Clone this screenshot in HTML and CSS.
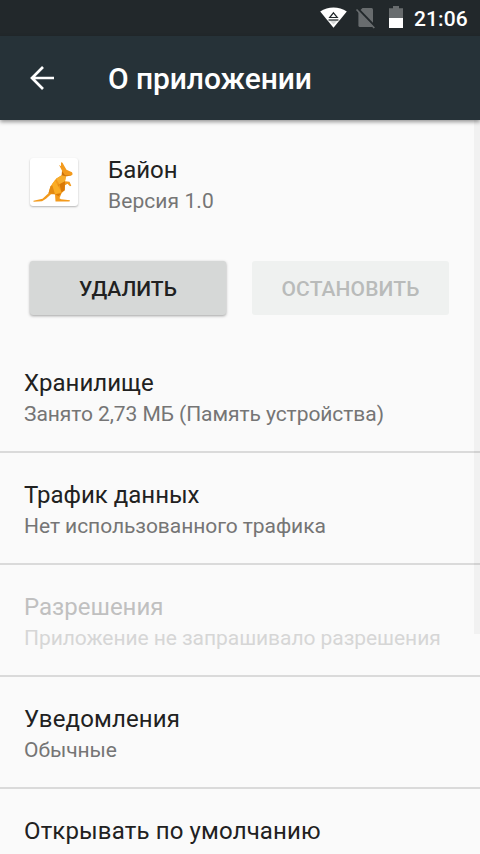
FILE: index.html
```html
<!DOCTYPE html>
<html lang="ru">
<head>
<meta charset="utf-8">
<title>О приложении</title>
<link rel="stylesheet" href="styles.css">
</head>
<body>
<div class="screen">
  <div class="statusbar">
    <svg class="status-icons" width="94" height="36" viewBox="320 0 94 36">
      <path d="M320.2 11.600C328 6 339 6 346.800 11.600L333.500 27.800Z" fill="#fff"/>
      <path d="M333.500 12.800L337.300 17.500H329.700Z" fill="#fff" stroke="#22282b" stroke-width="1.200"/>
      <path d="M329 20H338L333.500 24.500Z" fill="#d5d7d7"/>
      <path d="M328.500 20H338.500" stroke="#22282b" stroke-width="1.200"/>
      <path d="M362.500 8H371.500Q373 8 373 9.500V25.500Q373 27 371.500 27H360Q358.400 27 358.400 25.500V12Z" fill="#686c6e"/>
      <path d="M357.800 8.800L375.500 27" stroke="#22282b" stroke-width="2.500"/>
      <path d="M356.500 9.500L374.300 28" stroke="#686c6e" stroke-width="1.700"/>
      <path d="M389 8.300H393V6H399V8.300H403V18H389Z" fill="#686c6e"/>
      <path d="M389 18H403V28H389Z" fill="#fff"/>
    </svg>
    <span class="clock">21:06</span>
  </div>
  <header class="appbar">
    <svg class="back" width="24" height="24" viewBox="0 0 24 24" fill="none" stroke="#fff" stroke-width="2.700"><path d="M24 12H2.500M13 1L2 12L13 23"/></svg>
    <h1 class="title">О приложении</h1>
  </header>
  <main class="content">
    <section class="app">
      <div class="app-icon">
        <svg width="48" height="48" viewBox="0 0.800 48 48">
          <path d="M31 5L32.500 5.500L35 10L36.500 12.500L42 15L42.700 17L41 18.500L36 19L35 24L39.500 24.500L41.300 28.500L40 29L37.500 26.500L35 28L34.700 33L31.500 36L29.500 41L31 42L40 43L39.500 44.300H25.500L25 37L21 37L16 41.500L12 44L3.500 44.500V43.500L12.500 41.500L18.500 36L20.500 29L26 21.500L31.500 18L32 13.500L29 7.500L31 9Z" fill="#f39a1c"/>
          <path d="M26 21.500L32 18L36 19L35 24L29.500 27Z" fill="#f7ae2f"/>
          <path d="M20.500 29L29.500 27L25 37L18.500 36Z" fill="#e38a12"/>
          <path d="M22 27L25 23L31.500 35L25 37Z" fill="#fbad25"/>
          <path d="M29.500 27L35 24L34.700 33L31.500 35ZM25.500 37L31.500 36L28.500 39Z" fill="#d87908"/>
          <path d="M32 14L35 18L41 18.500L36 19L32 18Z" fill="#c9710c"/>
        </svg>
      </div>
      <div class="app-text">
        <div class="primary">Байон</div>
        <div class="secondary">Версия 1.0</div>
      </div>
    </section>
    <div class="actions">
      <button class="btn">УДАЛИТЬ</button>
      <button class="btn btn-disabled" disabled>ОСТАНОВИТЬ</button>
    </div>
    <section class="list">
      <div class="row"><div class="primary">Хранилище</div><div class="secondary">Занято 2,73 МБ (Память устройства)</div></div>
      <div class="row"><div class="primary">Трафик данных</div><div class="secondary">Нет использованного трафика</div></div>
      <div class="row row-disabled"><div class="primary">Разрешения</div><div class="secondary">Приложение не запрашивало разрешения</div></div>
      <div class="row"><div class="primary wide">Уведомления</div><div class="secondary">Обычные</div></div>
      <div class="row"><div class="primary wide">Открывать по умолчанию</div></div>
    </section>
    <div class="scrollbar"></div>
  </main>
</div>
</body>
</html>
```

FILE: styles.css
```css
* { box-sizing: border-box; }
body { margin: 0; font-family: Roboto, "Noto Sans", sans-serif; }
.screen {
  width: 480px;
  height: 854px;
  display: flex;
  flex-direction: column;
  overflow: hidden;
  background: #fafafa;
}
.statusbar {
  flex: none;
  height: 36px;
  padding-right: 12px;
  display: flex;
  justify-content: flex-end;
  align-items: center;
  background: #22282b;
}
.status-icons { display: block; }
.clock {
  width: 54px;
  font-size: 21px;
  font-weight: 500;
  line-height: 36px;
  letter-spacing: 0.1px;
  padding-top: 1px;
  color: #fff;
  white-space: nowrap;
}
.appbar {
  flex: none;
  height: 84px;
  padding-left: 30px;
  display: flex;
  align-items: center;
  gap: 54px;
  background: #263238;
  box-shadow: 0 2px 4px rgba(0, 0, 0, .4);
  z-index: 1;
}
.title {
  margin: 0;
  padding-top: 1px;
  font-size: 30px;
  font-weight: 500;
  line-height: 36px;
  letter-spacing: -0.08px;
  color: #fff;
}
.content { position: relative; flex: 1; min-height: 0; overflow: hidden; }
.app { display: flex; gap: 30px; padding: 34px 30px 0; height: 141px; }
.app-icon {
  width: 48px;
  height: 48px;
  margin-top: 4px;
  border-radius: 3px;
  background: #fff;
  box-shadow: 0 1px 2px rgba(0, 0, 0, .28);
}
.app-icon svg { display: block; }
.primary { font-size: 24px; line-height: 32px; color: #212121; white-space: nowrap; }
.wide { letter-spacing: 0.14px; }
.secondary { font-size: 21px; line-height: 31px; letter-spacing: -0.06px; color: #757575; white-space: nowrap; }
.app .secondary { letter-spacing: 0.08px; }
.actions { display: flex; gap: 26px; padding: 0 31px 0 30px; }
.btn {
  width: 196px;
  height: 54px;
  padding: 1px 0 0;
  border: 0;
  border-radius: 3px;
  background: #d6d8d7;
  box-shadow: 0 1px 3px rgba(0, 0, 0, .36);
  font-family: inherit;
  font-size: 21px;
  font-weight: 500;
  color: #212121;
}
.btn-disabled { width: 197px; letter-spacing: 0.1px; background: #eff1f0; color: #b9bbba; box-shadow: none; }
.list { padding-top: 26px; }
.row { height: 112px; padding: 26px 24px 0; border-bottom: 2px solid #dadada; }
.row-disabled .primary { color: #c0c0c0; }
.row-disabled .secondary { color: #d6d6d6; }
.scrollbar {
  position: absolute;
  top: 0;
  right: 0;
  width: 6px;
  height: 514px;
  background: rgba(0, 0, 0, .036);
}
```
